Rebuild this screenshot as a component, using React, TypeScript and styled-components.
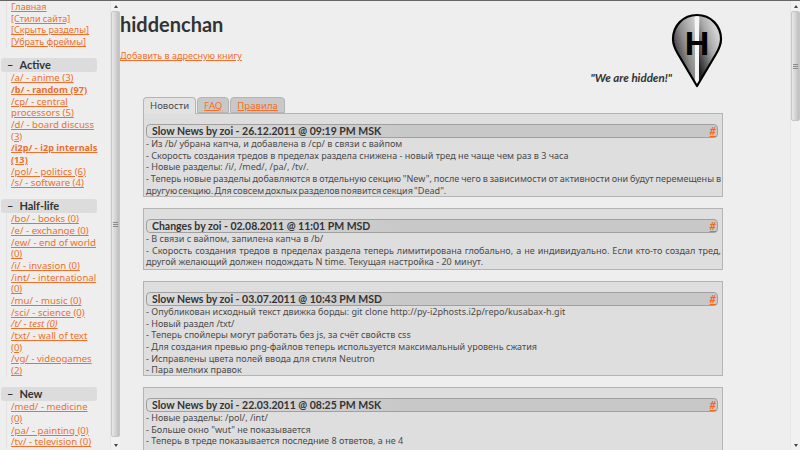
import React from "react";
import styled, { createGlobalStyle } from "styled-components";

const Global = createGlobalStyle`
  html, body { margin: 0; padding: 0; height: 100%; overflow: hidden; background: #eeeeee; }
  #root { height: 100%; }
`;

const Page = styled.div`
  width: 800px; height: 450px; display: flex; flex-direction: column; overflow: hidden;
  background: #eeeeee; color: #4a4a4a; font: 9.05px/11.67px "Noto Sans", "DejaVu Sans", sans-serif;
`;
const TopLine = styled.div`height: 1px; background: #666; flex: none;`;
const Frames = styled.div`flex: 1; display: flex; min-height: 0;`;
const Side = styled.nav`width: 110px; flex: none; overflow: hidden; padding: 0 0 0 1px; box-sizing: border-box;`;
const Main = styled.main`flex: 1; min-width: 0; overflow: hidden; padding: 0;`;

const Link = styled.a<{ $italic?: boolean }>`
  color: #f26f2a; text-decoration: underline; text-underline-offset: 1px;
  font-style: ${p => (p.$italic ? "italic" : "normal")};
`;
const BoardLink = styled(Link)<{ $strong?: boolean }>`
  font-size: ${p => (p.$strong ? 9.2 : 9.6)}px;
  font-weight: ${p => (p.$strong ? "bold" : "normal")};
`;
const List = styled.ul`
  list-style: none; margin: 0 0 0 5px; padding: 0 0 0 4px; width: 88px;
  border-left: 1px solid #e2e2e2;
`;
const Item = styled.li`margin: 0; padding: 0;`;
const SectionTitle = styled.h2<{ $gap: number }>`
  width: 96px; height: 14.5px; box-sizing: border-box; margin: ${p => p.$gap}px 0 0 0;
  display: flex; align-items: center; background: #dcdcdc; border-radius: 3px;
  font: bold 11px/14px Lato, "DejaVu Sans", sans-serif; color: #333; padding-left: 6px; gap: 6px;
`;
const Bar = styled.div`
  width: 10px; flex: none; display: flex; flex-direction: column; align-items: center; background: #f1f1f1;
  border-left: 1px solid #e6e6e6; box-sizing: border-box; height: 100%;
`;
const Arrow = styled.div<{ $down?: boolean }>`
  height: 10px; flex: none; display: flex; align-items: center; justify-content: center;
  &::after {
    content: ""; width: 0; height: 0; border-left: 2.5px solid transparent; border-right: 2.5px solid transparent;
    ${p => (p.$down ? "border-top: 3px solid #444;" : "border-bottom: 3px solid #444;")}
  }
`;
const Thumb = styled.div<{ $h: number }>`
  width: 9px; height: ${p => p.$h}px; flex: none; box-sizing: border-box; display: flex; align-items: center; justify-content: center;
  background: linear-gradient(90deg, #e8e8e8, #d4d4d4 50%, #bcbcbc); border: 1px solid #c6c6c6; border-radius: 2px;
`;
const Grip = styled.div`width: 5px; height: 5px; background: repeating-linear-gradient(#8a8a8a 0 1px, transparent 1px 2px);`;
const Spring = styled.div`flex: 1;`;

const Content = styled.div`padding-left: 0; position: relative;`;
const Head = styled.header`display: flex; justify-content: space-between; height: 95px;`;
const HeadLeft = styled.div`display: flex; flex-direction: column; align-items: flex-start;`;
const Title = styled.h1`margin: 11px 0 0 0; font: bold 20px/24px Lato, "DejaVu Sans", sans-serif; color: #333;`;
const AddLink = styled(Link)`margin-top: 13px; line-height: 13px;`;
const HeadRight = styled.div`display: flex; align-items: flex-start; margin-right: 67px; padding-top: 12px;`;
const Slogan = styled.div`
  margin: 58px -1px 0 0; font: italic bold 11.5px/13px Lato, "DejaVu Sans", sans-serif; color: #333; white-space: nowrap;
`;
const Wrap = styled.div`margin-left: 23px; width: 580px;`;
const Tabs = styled.div`display: flex; height: 16px; gap: 1px; margin-top: 1px;`;
const Tab = styled.div<{ $active?: boolean }>`
  height: ${p => (p.$active ? 17 : 16)}px; box-sizing: border-box; padding: 0 6px;
  border: 1px solid #b4b4b4; border-bottom: ${p => (p.$active ? "none" : "1px solid #b4b4b4")}; border-radius: 4px 4px 0 0;
  background: ${p => (p.$active ? "#e2e2e2" : "#c8c8c8")}; font-size: 9.6px; line-height: 15px; z-index: 1;
`;
const Panel = styled.section<{ $h: number }>`
  height: ${p => p.$h}px; box-sizing: border-box; width: 580px; margin-bottom: 11px; overflow: hidden;
  background: #dedede; border: 1px solid #b4b4b4; padding: 10px 1px 0 2px; text-align: justify;
`;
const PostHead = styled.div`
  display: flex; justify-content: space-between; height: 14px; box-sizing: border-box; width: 572px; margin-left: 0;
  background: linear-gradient(90deg, #dcdcdc, #c8c8c8 45%); border: 1px solid #a0a0a0; border-radius: 4px; padding: 0 1px 0 5px;
  font: bold 10.5px/12px Lato, "DejaVu Sans", sans-serif; color: #333;
`;
const Hash = styled.a`color: #f26a22; text-decoration: underline; font-style: italic; font-weight: bold; font-size: 11px;`;
const Line = styled.p<{ $tight?: boolean }>`
  margin: 0; white-space: pre-wrap; word-spacing: ${p => (p.$tight ? "-1.2px" : "0")};
`;

const Bars = ({ h }: { h: number }) => (
  <Bar>
    <Arrow />
    <Thumb $h={h}><Grip /></Thumb>
    <Spring />
    <Arrow $down />
  </Bar>
);

const pinPath = "M26 2C12 2 2 13 2 26c0 6 2 10 5 15l19 32 19-32c3-5 5-9 5-15C50 13 40 2 26 2z";
const Pin = () => (
  <svg width="52" height="75" viewBox="0 0 52 75">
    <defs>
      <linearGradient id="a" x1="1" y1="0" x2="0" y2="0.9">
        <stop offset="0" stopColor="#d8d8d8" />
        <stop offset="0.45" stopColor="#8c8c8c" />
        <stop offset="0.85" stopColor="#1c1c1c" />
      </linearGradient>
      <linearGradient id="b" x1="0.9" y1="0.05" x2="0" y2="1">
        <stop offset="0" stopColor="#f4f4f4" />
        <stop offset="0.45" stopColor="#a8a8a8" />
        <stop offset="0.85" stopColor="#222" />
      </linearGradient>
      <clipPath id="c"><path d={pinPath} /></clipPath>
    </defs>
    <g clipPath="url(#c)">
      <rect x="0" y="0" width="24" height="75" fill="url(#a)" />
      <rect x="28" y="0" width="24" height="75" fill="url(#b)" />
      <polygon points="23.5,0 28.5,0 27,75 25,75" fill="#f6f6f6" />
    </g>
    <path d={pinPath} fill="none" stroke="#000" strokeWidth="2.2" strokeLinejoin="round" />
    <text x="26" y="42" textAnchor="middle" fontFamily="'Liberation Sans', sans-serif" fontWeight="bold" fontSize="34" fill="#000">H</text>
  </svg>
);

type B = [string, boolean?, boolean?];
const sections: { name: string; gap: number; items: B[] }[] = [
  { name: "Active", gap: 10, items: [["/a/ - anime (3)"], ["/b/ - random (97)", true], ["/cp/ - central processors (5)"], ["/d/ - board discuss (3)"], ["/i2p/ - i2p internals (13)", true], ["/pol/ - politics (6)"], ["/s/ - software (4)"]] },
  { name: "Half-life", gap: 10, items: [["/bo/ - books (0)"], ["/e/ - exchange (0)"], ["/ew/ - end of world (0)"], ["/i/ - invasion (0)"], ["/int/ - international (0)"], ["/mu/ - music (0)"], ["/sci/ - science (0)"], ["/t/ - test (0)", false, true], ["/txt/ - wall of text (0)"], ["/vg/ - videogames (2)"]] },
  { name: "New", gap: 10, items: [["/med/ - medicine (0)"], ["/pa/ - painting (0)"], ["/tv/ - television (0)"]] },
];
const posts: { h: number; title: string; lines: string[] }[] = [
  { h: 84, title: "Slow News by zoi - 26.12.2011 @ 09:19 PM MSK", lines: ["- Из /b/ убрана капча, и добавлена в /cp/ в связи с вайпом", "- Скорость создания тредов в пределах раздела снижена - новый тред не чаще чем раз в 3 часа", "- Новые разделы: /i/, /med/, /pa/, /tv/.", "- Теперь новые разделы добавляются в отдельную секцию \"New\", после чего в зависимости от активности они будут перемещены в другую секцию. Для совсем дохлых разделов появится секция \"Dead\"."] },
  { h: 62, title: "Changes by zoi - 02.08.2011 @ 11:01 PM MSD", lines: ["- В связи с вайпом, запилена капча в /b/", "- Скорость создания тредов в пределах раздела теперь лимитирована глобально, а не индивидуально. Если кто-то создал тред, другой желающий должен подождать N time. Текущая настройка - 20 минут."] },
  { h: 95, title: "Slow News by zoi - 03.07.2011 @ 10:43 PM MSD", lines: ["- Опубликован исходный текст движка борды: git clone http://py-i2phosts.i2p/repo/kusabax-h.git", "- Новый раздел /txt/", "- Теперь спойлеры могут работать без js, за счёт свойств css", "- Для создания превью png-файлов теперь используется максимальный уровень сжатия", "- Исправлены цвета полей ввода для стиля Neutron", "- Пара мелких правок"] },
  { h: 96, title: "Slow News by zoi - 22.03.2011 @ 08:25 PM MSK", lines: ["- Новые разделы: /pol/, /int/", "- Больше окно \"wut\" не показывается", "- Теперь в треде показывается последние 8 ответов, а не 4"] },
];

export default function App() {
  return (
    <Page>
      <Global />
      <TopLine />
      <Frames>
        <Side>
          <List>
            {["Главная", "[Стили сайта]", "[Скрыть разделы]", "[Убрать фреймы]"].map(t => (
              <Item key={t}><Link href="#">{t}</Link></Item>
            ))}
          </List>
          {sections.map(s => (
            <React.Fragment key={s.name}>
              <SectionTitle $gap={s.gap}><span>–</span><span>{s.name}</span></SectionTitle>
              <List>
                {s.items.map(([t, strong, italic]) => (
                  <Item key={t}><BoardLink href="#" $strong={strong} $italic={italic}>{t}</BoardLink></Item>
                ))}
              </List>
            </React.Fragment>
          ))}
        </Side>
        <Bars h={426} />
        <Main>
          <Content>
            <Head>
              <HeadLeft>
                <Title>hiddenchan</Title>
                <AddLink href="#">Добавить в адресную книгу</AddLink>
              </HeadLeft>
              <HeadRight>
                <Slogan>"We are hidden!"</Slogan>
                <Pin />
              </HeadRight>
            </Head>
            <Wrap>
              <Tabs>
                <Tab $active>Новости</Tab>
                <Tab><Link href="#">FAQ</Link></Tab>
                <Tab><Link href="#">Правила</Link></Tab>
              </Tabs>
              {posts.map(p => (
                <Panel key={p.title} $h={p.h}>
                  <PostHead><span>{p.title}</span><Hash href="#">#</Hash></PostHead>
                  {p.lines.map(l => <Line key={l} $tight={l.includes("перемещены")}>{l}</Line>)}
                </Panel>
              ))}
            </Wrap>
          </Content>
        </Main>
        <Bars h={110} />
      </Frames>
    </Page>
  );
}
